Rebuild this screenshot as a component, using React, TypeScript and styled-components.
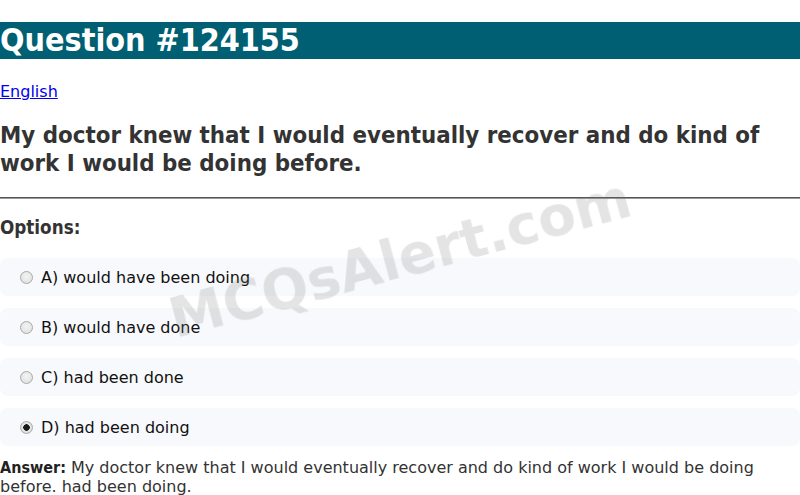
import styled, { createGlobalStyle } from "styled-components";

const GlobalStyle = createGlobalStyle`
  body {
    margin: 0;
    font-family: "DejaVu Sans", sans-serif;
    background: #fff;
  }
`;

const options = [
  { key: "A", text: "would have been doing" },
  { key: "B", text: "would have done" },
  { key: "C", text: "had been done" },
  { key: "D", text: "had been doing" },
];

const correct = "D";

function App() {
  return (
    <Page>
      <GlobalStyle />
      <Title>Question #124155</Title>
      <LangLine>
        <LangLink href="#">English</LangLink>
      </LangLine>
      <QuestionText>
        My doctor knew that I would eventually recover and do kind of work I would be doing before.
      </QuestionText>
      <Divider />
      <OptionsHeading>Options:</OptionsHeading>
      <OptionList>
        {options.map((o) => (
          <OptionRow key={o.key}>
            <Radio type="radio" name="opt" checked={o.key === correct} readOnly />
            <span>
              {o.key}) {o.text}
            </span>
          </OptionRow>
        ))}
      </OptionList>
      <Answer>
        <strong>Answer:</strong> My doctor knew that I would eventually recover and do kind of work I
        would be doing before. had been doing.
      </Answer>
      <Watermark>MCQsAlert.com</Watermark>
    </Page>
  );
}

export default App;

const boldFont = `"DejaVu Sans Condensed", "DejaVu Sans", sans-serif`;

const Page = styled.div`
  width: 100%;
`;

const Title = styled.h1`
  margin: 22px 0 23px;
  background-color: #005f73;
  color: #fff;
  font-family: ${boldFont};
  font-size: 32px;
  font-weight: bold;
  line-height: 37px;
`;

const LangLine = styled.p`
  margin: 0 0 16px;
  font-size: 16px;
  line-height: 19px;
`;

const LangLink = styled.a`
  color: #0000ee;
`;

const QuestionText = styled.h2`
  margin: 20px 0;
  color: #333;
  font-family: ${boldFont};
  font-size: 23.8px;
  font-weight: bold;
  line-height: 28px;
`;

const Divider = styled.hr`
  margin: 0;
  border: none;
  border-top: 1px solid #555;
  border-bottom: 1px solid #999;
`;

const OptionsHeading = styled.h3`
  margin: 18px 0 19px;
  color: #333;
  font-family: ${boldFont};
  font-size: 18.7px;
  font-weight: bold;
  line-height: 22px;
`;

const OptionList = styled.div`
  display: flex;
  flex-direction: column;
  gap: 12px;
`;

const OptionRow = styled.label`
  display: flex;
  align-items: center;
  padding: 10px 15px;
  height: 38px;
  box-sizing: border-box;
  background-color: #f8f9fc;
  border-radius: 8px;
  font-size: 16px;
  color: #111;

  span {
    margin-left: 8px;
  }
`;

const Radio = styled.input`
  appearance: none;
  margin: 0 0 0 5px;
  width: 13px;
  height: 13px;
  box-sizing: border-box;
  border-radius: 50%;
  border: 1px solid #a9a9a9;
  background: radial-gradient(circle at 50% 40%, #f4f4f4 0%, #dcdcdc 100%);

  &:checked {
    background: radial-gradient(circle, #1a1a1a 0 3px, #e6e6e6 3.5px, #d4d4d4 100%);
  }
`;

const Answer = styled.p`
  margin: 12px 0 0;
  color: #333;
  font-size: 16px;
  line-height: 19px;

  strong {
    font-family: ${boldFont};
    color: #222;
  }
`;

const Watermark = styled.div`
  position: fixed;
  left: 400px;
  top: 258px;
  transform: translate(-50%, -50%) rotate(-15deg);
  font-family: "DejaVu Sans", sans-serif;
  font-size: 55px;
  font-weight: bold;
  color: rgba(120, 120, 120, 0.2);
  white-space: nowrap;
  pointer-events: none;
`;
